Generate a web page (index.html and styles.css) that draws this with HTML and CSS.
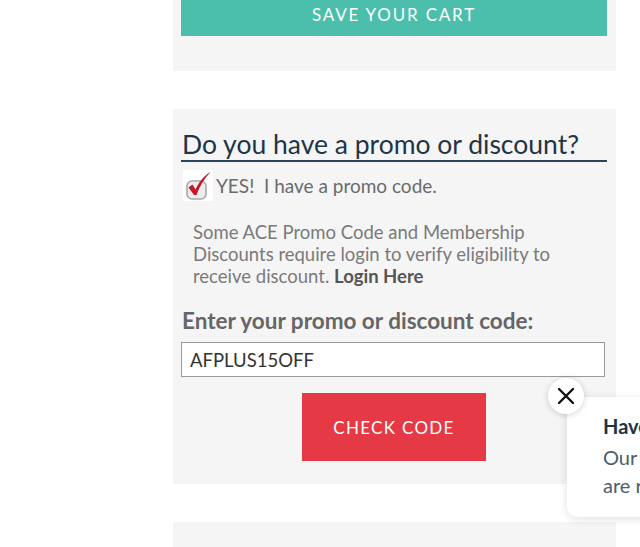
FILE: index.html
```html
<!DOCTYPE html>
<html>
<head>
	<title>Cart - Promo Code</title>
	<link rel="stylesheet" href="styles.css">
</head>
<body>
	<div class="page">
		<div class="panel panel-cart">
			<button class="btn-save" type="button">SAVE YOUR CART</button>
		</div>

		<div class="panel panel-promo">
			<h2 class="promo-title">Do you have a promo or discount?</h2>
			<label class="promo-check">
				<svg class="check-icon" width="30" height="31" viewBox="0 0 30 31">
					<rect x="0" y="0" width="30" height="31" fill="#fff"/>
					<rect x="4" y="11" width="19" height="18" rx="5" fill="#ececec" stroke="#a9a9a9" stroke-width="1.6"/>
					<path d="M5.5 17.5 L9.5 14.5 L12.5 19.5 C15.5 12.5 20.5 6 27.5 2 C21.5 8.5 16.5 16 13.5 25 L11 25 Z" fill="#c5162e"/>
				</svg>
				<span>YES!&nbsp; I have a promo code.</span>
			</label>
			<p class="promo-note">
				Some ACE Promo Code and Membership Discounts require login to verify eligibility to receive discount. <b>Login Here</b>
			</p>
			<div class="code-label">Enter your promo or discount code:</div>
			<input class="code-input" type="text" value="AFPLUS15OFF">
			<div class="code-actions">
				<button class="btn-check" type="button">CHECK CODE</button>
			</div>
		</div>

		<div class="panel panel-next"></div>
	</div>

	<!-- chat teaser in the corner -->
	<div class="teaser">
		<div class="teaser-title">Have a question?</div>
		<div class="teaser-text">Our experts are ready.</div>
	</div>
	<button class="teaser-close" type="button">
		<svg width="22" height="22" viewBox="0 0 22 22">
			<path d="M4 4 L18 18 M18 4 L4 18" stroke="#111" stroke-width="2.4" stroke-linecap="round"/>
		</svg>
	</button>
</body>
</html>
```

FILE: styles.css
```css
html, body {
	margin: 0;
	padding: 0;
	background: #fff;
	overflow: hidden;
}
body {
	font-family: "Lato", "Noto Sans", sans-serif;
	height: 547px;
	position: relative;
}
.page {
	margin-left: 173px;
	width: 443px;
}
.panel {
	background: #f5f5f5;
	box-sizing: border-box;
}
.panel-cart {
	height: 71px;
	padding: 0 9px 0 8px;
	margin-bottom: 38px;
}
.btn-save {
	display: block;
	width: 100%;
	height: 36px;
	padding: 0 0 8px 0;
	border: none;
	background: #4bbfac;
	color: #fff;
	font-family: "Lato", sans-serif;
	font-size: 17px;
	font-weight: 400;
	letter-spacing: 1.8px;
}
.panel-promo {
	height: 375px;
	padding: 19px 9px 0 8px;
	margin-bottom: 38px;
}
.promo-title {
	margin: 0;
	padding: 1px 0 0 1px;
	font-size: 26.5px;
	font-weight: 400;
	color: #1f3547;
	border-bottom: 2px solid #2b4458;
	line-height: 31px;
}
.promo-check {
	display: flex;
	align-items: center;
	margin-top: 8px;
	margin-left: 2px;
	font-size: 19px;
	color: #6b6b6b;
}
.check-icon {
	margin-right: 3px;
}
.promo-note {
	margin: 20px 0 0 12px;
	padding-right: 40px;
	font-size: 18.5px;
	line-height: 22px;
	color: #7a7a7a;
}
.promo-note b {
	color: #555;
}
.code-label {
	margin-top: 20px;
	margin-left: 1px;
	font-size: 22.5px;
	font-weight: 700;
	color: #666;
}
.code-input {
	display: block;
	box-sizing: border-box;
	width: 424px;
	height: 35px;
	margin-top: 8px;
	padding: 0 8px;
	border: 1px solid #9a9a9a;
	background: #fff;
	font-family: "Lato", sans-serif;
	font-size: 18.5px;
	color: #333;
}
.code-actions {
	display: flex;
	justify-content: center;
	margin-top: 16px;
}
.btn-check {
	width: 184px;
	height: 68px;
	border: none;
	background: #e63946;
	color: #fff;
	font-family: "Lato", sans-serif;
	font-size: 17px;
	letter-spacing: 1.3px;
}
.panel-next {
	height: 30px;
}
.teaser {
	position: absolute;
	left: 567px;
	top: 397px;
	width: 260px;
	height: 120px;
	background: #fff;
	border-radius: 10px;
	box-shadow: 0 2px 10px rgba(0, 0, 0, 0.12);
	padding: 17px 0 0 36px;
	box-sizing: border-box;
	white-space: nowrap;
}
.teaser-title {
	font-size: 20px;
	font-weight: 700;
	color: #1f3547;
}
.teaser-text {
	margin-top: 5px;
	width: 115px;
	white-space: normal;
	font-size: 20px;
	line-height: 28px;
	color: #4d5d6c;
}
.teaser-close {
	position: absolute;
	left: 548px;
	top: 378px;
	width: 36px;
	height: 36px;
	border: none;
	border-radius: 50%;
	background: #fff;
	box-shadow: 0 1px 6px rgba(0, 0, 0, 0.18);
	padding: 0;
	display: flex;
	align-items: center;
	justify-content: center;
}
```
